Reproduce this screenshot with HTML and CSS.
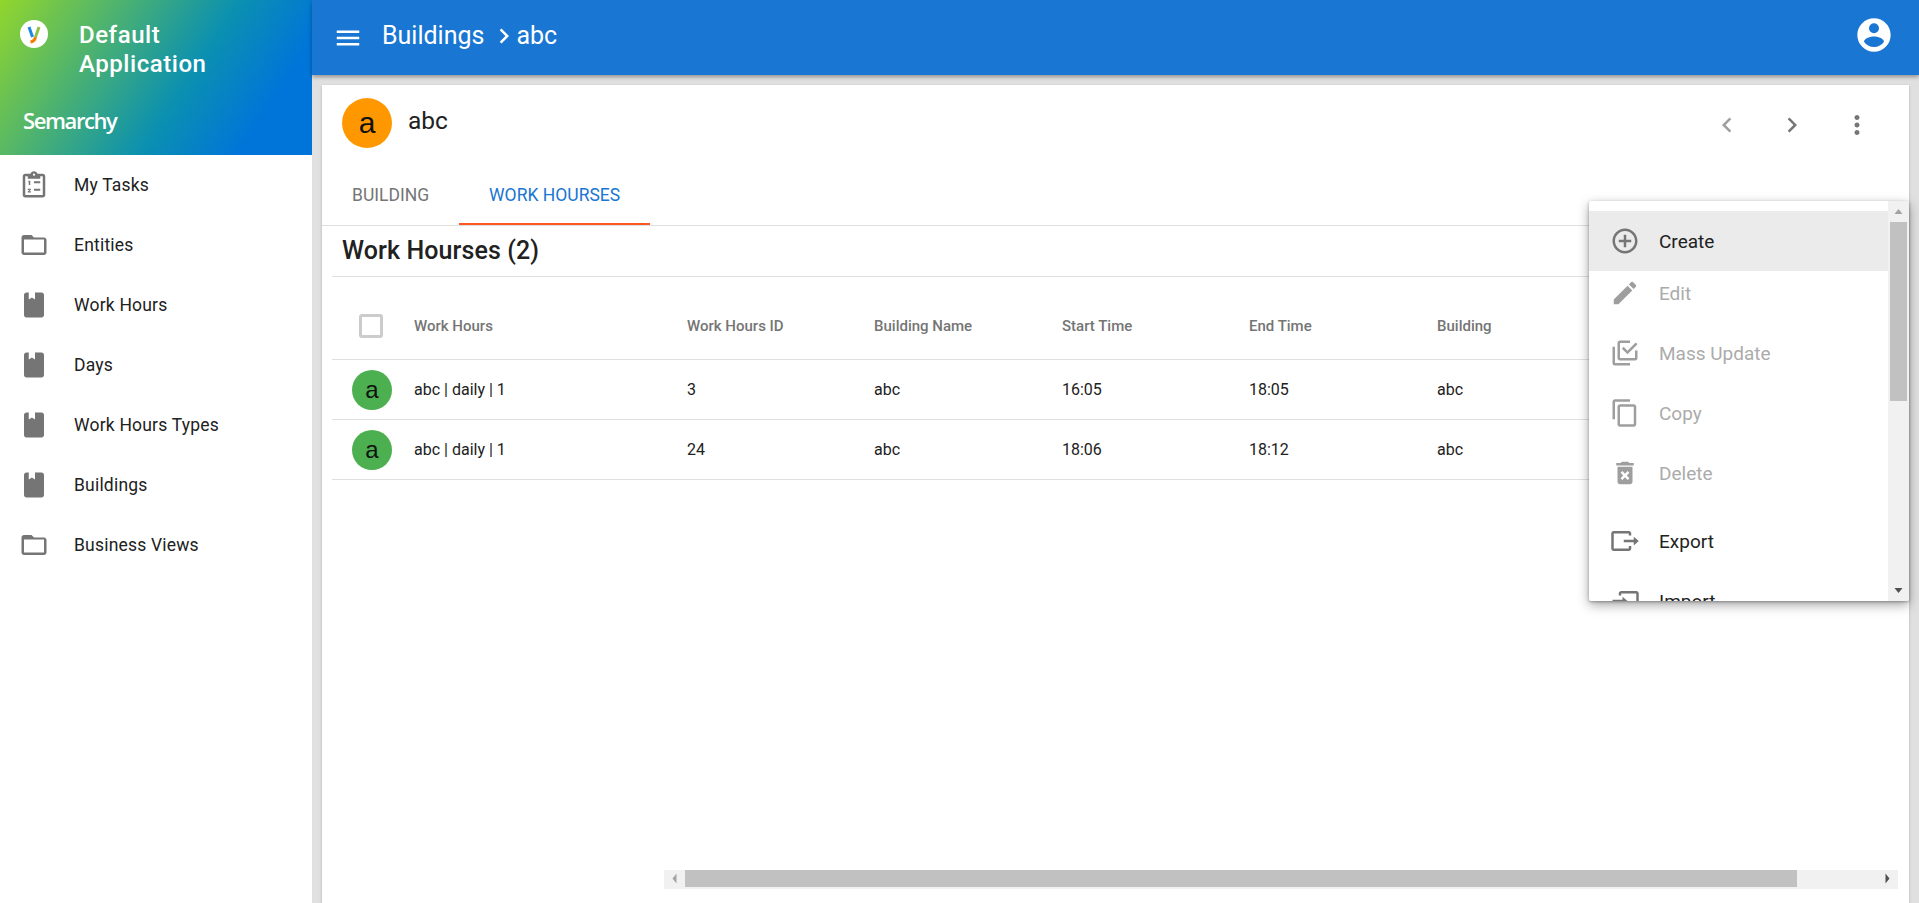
FILE: index.html
```html
<!DOCTYPE html>
<html lang="en">
<head>
<meta charset="utf-8">
<title>Buildings</title>
<link rel="stylesheet" href="styles.css">
</head>
<body>
<div class="shell">
  <aside class="sidebar">
    <div class="brand">
      <div class="brand-top">
        <svg class="logo" viewBox="0 0 28 28"><circle cx="14" cy="14" r="14" fill="#fff"/><path d="M9 7l3.5 10" stroke="#1e88e5" stroke-width="3" fill="none"/><path d="M19 7l-3.5 10" stroke="#8bc34a" stroke-width="3" fill="none"/><path d="M15.500 17c-.5 3-2 4.500-5 5" stroke="#f57c00" stroke-width="3" fill="none"/></svg>
        <div class="brand-name">Default Application</div>
      </div>
      <div class="brand-mark">Semarchy</div>
    </div>
    <nav class="nav">
      <a class="nav-item"><svg class="nav-icon" viewBox="0 0 24 24"><path fill-rule="evenodd" d="M19 3h-4.180C14.400 1.840 13.300 1 12 1s-2.400.84-2.820 2H5c-1.100 0-2 .9-2 2v15c0 1.100.9 2 2 2h14c1.100 0 2-.9 2-2V5c0-1.100-.9-2-2-2zM5 5h2v2h10V5h2v15H5V5zm7-2.200a.9.9 0 1 1 0 1.800.9.9 0 0 1 0-1.800z"/><path d="M12 9h5v1.500h-5zM12 15h5v1.500h-5zM7.500 8.500h1.500V12H7.800V9.700h-.3zM7 15h2.500v.8L8.300 17h1.200v1H7v-.8l1.300-1.300H7z"/></svg><span>My Tasks</span></a>
      <a class="nav-item"><svg class="nav-icon" viewBox="0 0 24 24"><use href="#i-folder"/></svg><span>Entities</span></a>
      <a class="nav-item"><svg class="nav-icon" viewBox="0 0 24 24"><use href="#i-book"/></svg><span>Work Hours</span></a>
      <a class="nav-item"><svg class="nav-icon" viewBox="0 0 24 24"><use href="#i-book"/></svg><span>Days</span></a>
      <a class="nav-item"><svg class="nav-icon" viewBox="0 0 24 24"><use href="#i-book"/></svg><span>Work Hours Types</span></a>
      <a class="nav-item"><svg class="nav-icon" viewBox="0 0 24 24"><use href="#i-book"/></svg><span>Buildings</span></a>
      <a class="nav-item"><svg class="nav-icon" viewBox="0 0 24 24"><use href="#i-folder"/></svg><span>Business Views</span></a>
    </nav>
  </aside>
  <div class="main">
    <header class="toolbar">
      <svg class="menu-icon" viewBox="0 0 24 24"><path d="M3 18h18v-2H3v2zm0-5h18v-2H3v2zm0-7v2h18V6H3z"/></svg>
      <span class="crumb">Buildings</span>
      <svg class="crumb-sep" viewBox="0 0 24 24"><path d="M10 6L8.590 7.410 13.170 12l-4.580 4.590L10 18l6-6z"/></svg>
      <span class="crumb">abc</span>
      <svg class="account" viewBox="0 0 24 24"><path d="M12,19.200C9.500,19.200 7.290,17.920 6,16C6.030,14 10,12.900 12,12.900C14,12.900 17.970,14 18,16C16.710,17.920 14.500,19.200 12,19.200M12,5A3,3 0 0,1 15,8A3,3 0 0,1 12,11A3,3 0 0,1 9,8A3,3 0 0,1 12,5M12,2A10,10 0 0,0 2,12A10,10 0 0,0 12,22A10,10 0 0,0 22,12C22,6.470 17.500,2 12,2Z"/></svg>
    </header>
    <div class="content">
      <section class="card">
        <div class="record">
          <div class="avatar avatar-lg">a</div>
          <div class="record-title">abc</div>
          <div class="record-actions">
            <svg class="act act-dim" viewBox="0 0 24 24"><path d="M15.410 7.410L14 6l-6 6 6 6 1.410-1.410L10.830 12z"/></svg>
            <svg class="act" viewBox="0 0 24 24"><path d="M10 6L8.590 7.410 13.170 12l-4.580 4.590L10 18l6-6z"/></svg>
            <svg class="act" viewBox="0 0 24 24"><path d="M12 8c1.100 0 2-.9 2-2s-.9-2-2-2-2 .9-2 2 .9 2 2 2zm0 2c-1.100 0-2 .9-2 2s.9 2 2 2 2-.9 2-2-.9-2-2-2zm0 6c-1.100 0-2 .9-2 2s.9 2 2 2 2-.9 2-2-.9-2-2-2z"/></svg>
          </div>
        </div>
        <div class="tabs">
          <div class="tab">BUILDING</div>
          <div class="tab tab-active">WORK HOURSES</div>
        </div>
        <div class="panel">
          <h2 class="panel-title">Work Hourses (2)</h2>
          <div class="grid grid-head">
            <div><span class="checkbox"></span></div>
            <div>Work Hours</div><div>Work Hours ID</div><div>Building Name</div><div>Start Time</div><div>End Time</div><div>Building</div>
          </div>
          <div class="grid grid-row">
            <div><span class="avatar avatar-sm">a</span></div>
            <div>abc | daily | 1</div><div>3</div><div>abc</div><div>16:05</div><div>18:05</div><div>abc</div>
          </div>
          <div class="grid grid-row">
            <div><span class="avatar avatar-sm">a</span></div>
            <div>abc | daily | 1</div><div>24</div><div>abc</div><div>18:06</div><div>18:12</div><div>abc</div>
          </div>
        </div>
        <div class="hscroll">
          <svg class="sb-arrow" viewBox="0 0 21 17"><path d="M12.500 3.500v10L8.500 8.500z" fill="#a3a3a3"/></svg>
          <div class="hscroll-track"><div class="hscroll-thumb"></div></div>
          <svg class="sb-arrow" viewBox="0 0 21 17"><path d="M8.500 3.500v10l4-5z" fill="#505050"/></svg>
        </div>
      </section>
    </div>
  </div>
</div>

<div class="dropdown">
  <div class="dropdown-list">
    <div class="mi mi-hover"><svg class="mi-icon" viewBox="0 0 24 24"><path d="M13 7h-2v4H7v2h4v4h2v-4h4v-2h-4V7zm-1-5C6.480 2 2 6.480 2 12s4.480 10 10 10 10-4.480 10-10S17.520 2 12 2zm0 18c-4.410 0-8-3.590-8-8s3.590-8 8-8 8 3.590 8 8-3.590 8-8 8z"/></svg><span>Create</span></div>
    <div class="mi mi-off mi-short"><svg class="mi-icon" viewBox="0 0 24 24"><path d="M3 17.250V21h3.750L17.810 9.940l-3.750-3.750L3 17.250zM20.710 7.040c.39-.39.39-1.020 0-1.410l-2.340-2.340c-.39-.39-1.020-.39-1.410 0l-1.830 1.830 3.750 3.750 1.830-1.830z"/></svg><span>Edit</span></div>
    <div class="mi mi-off"><svg class="mi-icon" viewBox="0 0 24 24"><path d="M20,16V10H22V16A2,2 0 0,1 20,18H8C6.890,18 6,17.100 6,16V4C6,2.890 6.890,2 8,2H16V4H8V16H20M10.910,7.080L14,10.170L20.590,3.580L22,5L14,13L9.500,8.500L10.910,7.080M16,20V22H4A2,2 0 0,1 2,20V7H4V20H16Z"/></svg><span>Mass Update</span></div>
    <div class="mi mi-off"><svg class="mi-icon" viewBox="0 0 24 24"><path d="M16 1H4c-1.100 0-2 .9-2 2v14h2V3h12V1zm3 4H8c-1.100 0-2 .9-2 2v14c0 1.100.9 2 2 2h11c1.100 0 2-.9 2-2V7c0-1.100-.9-2-2-2zm0 16H8V7h11v14z"/></svg><span>Copy</span></div>
    <div class="mi mi-off mi-last"><svg class="mi-icon" viewBox="0 0 24 24"><path d="M6 19c0 1.100.9 2 2 2h8c1.100 0 2-.9 2-2V7H6v12zm2.460-7.120l1.410-1.410L12 12.590l2.120-2.120 1.410 1.410L13.410 14l2.120 2.120-1.410 1.410L12 15.410l-2.120 2.120-1.410-1.410L10.590 14l-2.130-2.120zM15.500 4l-1-1h-5l-1 1H5v2h14V4z"/></svg><span>Delete</span></div>
    <div class="mi"><svg class="mi-icon" viewBox="0 0 24 24"><path d="M17 16v2c0 1.100-.9 2-2 2H3c-1.100 0-2-.9-2-2V6c0-1.100.9-2 2-2h12c1.100 0 2 .9 2 2v1.500h-2V6H3v12h12v-2h2zM11 11h8V8.500l4 3.500-4 3.500V13h-8v-2z"/></svg><span>Export</span></div>
    <div class="mi"><svg class="mi-icon" viewBox="0 0 24 24"><path d="M7 16v2c0 1.100.9 2 2 2h12c1.100 0 2-.9 2-2V6c0-1.100-.9-2-2-2H9c-1.100 0-2 .9-2 2v1.500h2V6h12v12H9v-2H7zM2 11h8V8.500l4 3.500-4 3.500V13H2v-2z"/></svg><span>Import</span></div>
  </div>
  <div class="vscroll">
    <svg class="vs-arrow" viewBox="0 0 21 21"><path d="M6.500 13h8l-4-5z" fill="#a3a3a3"/></svg>
    <div class="vscroll-track"><div class="vscroll-thumb"></div></div>
    <svg class="vs-arrow" viewBox="0 0 21 21"><path d="M6.500 8h8l-4 5z" fill="#505050"/></svg>
  </div>
</div>

<svg class="defs" aria-hidden="true">
  <defs>
    <path id="i-folder" fill-rule="evenodd" d="M10 4H4c-1.100 0-1.990.9-1.990 2L2 18c0 1.100.9 2 2 2h16c1.100 0 2-.9 2-2V8c0-1.100-.9-2-2-2h-8l-2-2zM4 7.500h16V18H4V7.500z"/>
    <path id="i-book" fill-rule="evenodd" d="M18 2H6c-1.100 0-2 .9-2 2v16c0 1.100.9 2 2 2h12c1.100 0 2-.9 2-2V4c0-1.100-.9-2-2-2zM7.800 2h5v5.500l-2.500-1.500-2.500 1.500V2z"/>
  </defs>
</svg>
</body>
</html>
```
FILE: styles.css
```css
* { box-sizing: border-box; }
html, body { margin: 0; height: 100%; }
body {
  height: 903px;
  overflow: hidden;
  position: relative;
  font-family: Roboto, "Liberation Sans", sans-serif;
  color: #212121;
  background: #fff;
}
.defs { position: absolute; width: 0; height: 0; }

.shell { display: grid; grid-template-columns: 312px 1fr; height: 903px; }

/* Sidebar */
.sidebar { background: #fff; display: flex; flex-direction: column; }
.brand {
  height: 155px;
  background: linear-gradient(123deg, #92d62c 0%, #0b90b0 58%, #0075d9 82%, #0075d9 100%);
  color: #fff;
  padding: 20px 20px 0;
  display: flex;
  flex-direction: column;
}
.brand-top { display: flex; align-items: flex-start; }
.logo { width: 28px; height: 28px; flex: none; margin-right: 31px; }
.brand-name { font-size: 24px; font-weight: 500; line-height: 29px; width: 200px; margin-top: 1px; letter-spacing: .55px; }
.brand-mark {
  font-family: "Open Sans", sans-serif;
  font-size: 22px;
  font-weight: 600;
  letter-spacing: -1.4px;
  margin: 26px 0 0 3px;
  line-height: 30px;
}
.nav { display: flex; flex-direction: column; }
.nav-item { display: flex; align-items: center; height: 60px; padding-left: 19px; font-size: 17.5px; letter-spacing: .2px; color: #212121; }
.nav-icon { width: 30px; height: 30px; fill: #757575; margin-right: 25px; flex: none; }

/* Main */
.main { display: flex; flex-direction: column; min-width: 0; background: #e0e0e0; }
.toolbar {
  height: 75px;
  flex: none;
  background: #1976d2;
  color: #fff;
  display: flex;
  align-items: center;
  padding: 0 25px 0 21px;
  box-shadow: 0 2px 4px rgba(0,0,0,.35);
  position: relative;
}
.menu-icon { width: 30px; height: 30px; fill: #fff; margin-right: 19px; }
.crumb { font-size: 25px; line-height: 30px; margin-top: -4px; }
.crumb-sep { width: 30px; height: 30px; fill: #fff; margin: -4px -3px 0 5px; }
.account { width: 40px; height: 40px; fill: #fff; margin-left: auto; margin-top: -5px; }

.content { flex: 1; padding: 10px 10px 0; min-height: 0; display: flex; }
.card { flex: 1; background: #fff; display: flex; flex-direction: column; box-shadow: 0 1px 3px rgba(0,0,0,.2); min-width: 0; }

.record { height: 90px; flex: none; display: flex; align-items: flex-start; padding: 13px 0 0 20px; }
.avatar { display: flex; align-items: center; justify-content: center; border-radius: 50%; font-family: "Liberation Sans", Arial, sans-serif; color: #111; }
.avatar-lg { width: 50px; height: 50px; background: #ff9800; font-size: 30px; line-height: 50px; }
.record-title { font-size: 24.5px; margin-left: 16px; line-height: 30px; margin-top: 8px; }
.record-actions { margin-left: auto; display: flex; gap: 35px; padding: 12px 37px 0 0; }
.act { width: 30px; height: 30px; fill: #757575; }
.act-dim { fill: #9e9e9e; }

.tabs { height: 51px; flex: none; display: flex; border-bottom: 1px solid #e0e0e0; }
.tab { padding: 0 30px; font-size: 17.5px; line-height: 40px; color: #757575; height: 50px; }
.tab-active { color: #1976d2; border-bottom: 2px solid #ff5722; }

.panel { flex: 1; padding: 0 10px; min-height: 0; }
.panel-title { margin: 0; height: 51px; line-height: 50px; font-size: 25px; font-weight: 500; letter-spacing: .1px; padding-left: 10px; color: #212121; border-bottom: 1px solid #e0e0e0; }

.grid { display: grid; grid-template-columns: 82px 273px 187px 188px 187px 188px 1fr; align-items: center; border-bottom: 1px solid #e0e0e0; }
.grid-head { height: 83px; font-size: 15px; font-weight: 500; color: #757575; padding-top: 15px; }
.grid-row { height: 60px; font-size: 16px; color: #212121; }
.checkbox { display: block; width: 24px; height: 24px; border: 3px solid #ccc; border-radius: 3px; margin-left: 27px; }
.avatar-sm { width: 40px; height: 40px; background: #4caf50; font-size: 24px; margin-left: 20px; }

.hscroll { flex: none; margin: 0 11px 14px 342px; height: 19px; background: #f1f1f1; display: flex; padding-bottom: 2px; }
.sb-arrow { width: 21px; height: 17px; flex: none; }
.hscroll-track { flex: 1; }
.hscroll-thumb { width: 1112px; height: 17px; background: #c1c1c1; }

/* Overlay menu */
.dropdown {
  position: absolute;
  left: 1589px;
  top: 201px;
  width: 320px;
  height: 400px;
  background: #fff;
  box-shadow: 0 4px 12px rgba(0,0,0,.35), 0 1px 3px rgba(0,0,0,.3);
  display: flex;
  overflow: hidden;
  border-radius: 2px;
}
.dropdown-list { flex: 1; padding-top: 10px; min-width: 0; }
.mi { height: 60px; display: flex; align-items: center; padding-left: 21px; font-size: 19px; color: #212121; }
.mi-hover { background: #ebebeb; }
.mi-off { color: #ababab; }
.mi-short { height: 44px; margin-bottom: 8px; }
.mi-last { margin-bottom: 8px; }
.mi-icon { width: 30px; height: 30px; fill: #757575; margin-right: 19px; flex: none; }
.mi-off .mi-icon { fill: #9e9e9e; }
.vscroll { width: 21px; flex: none; background: #f1f1f1; display: flex; flex-direction: column; }
.vs-arrow { height: 21px; width: 21px; flex: none; }
.vscroll-track { flex: 1; padding: 0 2px; }
.vscroll-thumb { height: 179px; background: #c1c1c1; }
```
